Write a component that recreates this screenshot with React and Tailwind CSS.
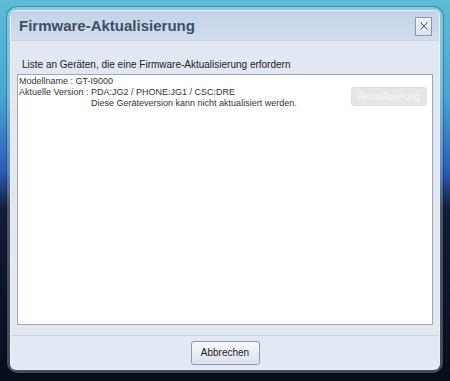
import React from 'react';

const font = { fontFamily: '"Liberation Sans", Arial, sans-serif' };

const App = () => {
  return (
    <div
      className="w-[450px] h-[381px] pt-[7px] px-[7px] pb-[8px] bg-[linear-gradient(to_bottom,#5cbcd5_0%,#4aa6d2_25%,#2d5cb4_45%,#121c38_55%,#080d1c_100%)]"
      style={font}
    >
      {/* Window frame */}
      <div className="h-full rounded-[10px] bg-white/25 p-[3px] shadow-[0_0_0_1px_rgba(0,0,0,0.25)]">
        <div className="h-full flex flex-col rounded-[6px] overflow-hidden bg-[#e1e8f2] border border-white/40">
          {/* Title bar */}
          <div className="h-[30px] flex items-center justify-between pl-[8px] pr-[7px] bg-[linear-gradient(to_bottom,#c3d2e6,#d2deed)] border-b border-[#c8d3e2]">
            <h1 className="text-[15px] font-bold text-[#3e4d69] leading-none">Firmware-Aktualisierung</h1>
            <button className="w-[17px] h-[19px] mt-[1px] flex items-center justify-center border border-[#8d99ab] bg-[linear-gradient(to_bottom,#eef2f8,#d9e2ee)]">
              <svg width="8" height="8" viewBox="0 0 8 8">
                <path d="M0.5 0.5L7.5 7.5M7.5 0.5L0.5 7.5" stroke="#4a5262" strokeWidth="1" />
              </svg>
            </button>
          </div>

          {/* Content */}
          <div className="flex-1 flex flex-col px-[6px] pb-[10px]">
            <p className="mt-[18px] mb-[3px] pl-[5px] text-[10px] leading-[12px] text-[#222]">
              Liste an Geräten, die eine Firmware-Aktualisierung erfordern
            </p>
            <div className="flex-1 flex justify-between bg-white border border-[#9da6b2]">
              <div className="pl-[1px] pt-[1px] text-[9px] leading-[11px] text-[#333]">
                <div>Modellname : GT-I9000</div>
                <div className="flex">
                  <span className="whitespace-pre">Aktuelle Version : </span>
                  <div>
                    <div>PDA:JG2 / PHONE:JG1 / CSC:DRE</div>
                    <div>Diese Geräteversion kann nicht aktualisiert werden.</div>
                  </div>
                </div>
              </div>
              <div className="pt-[8px] pr-[5px]">
                <button
                  disabled
                  className="w-[76px] h-[19px] rounded-[3px] border border-[#dedede] bg-[#e6e6e6] text-[10px] text-[#f7f7f7]"
                >
                  Aktualisierung
                </button>
              </div>
            </div>
          </div>

          {/* Footer */}
          <div className="h-[34px] flex items-center justify-center border-t border-[#c9d2de] bg-[#e3e9f3]">
            <button className="w-[69px] h-[24px] rounded-[3px] border border-[#8e9aab] bg-[linear-gradient(to_bottom,#f6f8fb,#dbe3ee)] text-[10px] text-[#222]">
              Abbrechen
            </button>
          </div>
        </div>
      </div>
    </div>
  );
};

export default App;
